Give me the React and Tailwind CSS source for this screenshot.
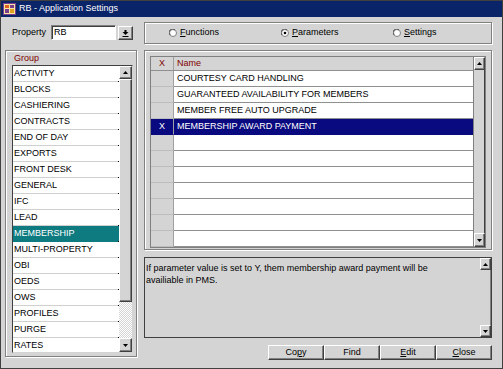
import React from "react";

const raised =
  "border border-t-white border-l-white border-r-[#404040] border-b-[#404040] shadow-[inset_-1px_-1px_0_#808080]";
const etched =
  "border border-[#808080] shadow-[inset_1px_1px_0_#ffffff,1px_1px_0_#ffffff]";

function Arrow({ dir }) {
  return (
    <svg width="5" height="3" viewBox="0 0 5 3">
      {dir === "up" ? (
        <path d="M2.5 0 L5 3 L0 3Z" fill="#000" />
      ) : (
        <path d="M0 0 L5 0 L2.5 3Z" fill="#000" />
      )}
    </svg>
  );
}

function ScrollBtn({ dir, h }) {
  return (
    <div
      className={`${raised} bg-[#d4d4d4] flex items-center justify-center shrink-0`}
      style={{ height: h }}
    >
      <Arrow dir={dir} />
    </div>
  );
}

function Radio({ checked, label, u }) {
  return (
    <div className="flex items-center w-[112px] shrink-0">
      <svg width="8" height="8" viewBox="0 0 8 8" className="mr-[3px]">
        <circle cx="4" cy="4" r="3.5" fill="#fff" stroke="#808080" strokeWidth="1" />
        <path d="M1 6 A3.5 3.5 0 0 1 6 1" stroke="#404040" strokeWidth="0.8" fill="none" />
        {checked && <circle cx="4" cy="4" r="1.3" fill="#000" />}
      </svg>
      <span>
        <span className="underline">{u}</span>
        {label}
      </span>
    </div>
  );
}

const groups = [
  "ACTIVITY",
  "BLOCKS",
  "CASHIERING",
  "CONTRACTS",
  "END OF DAY",
  "EXPORTS",
  "FRONT DESK",
  "GENERAL",
  "IFC",
  "LEAD",
  "MEMBERSHIP",
  "MULTI-PROPERTY",
  "OBI",
  "OEDS",
  "OWS",
  "PROFILES",
  "PURGE",
  "RATES",
];

const params = [
  { name: "COURTESY CARD HANDLING" },
  { name: "GUARANTEED AVAILABILITY FOR MEMBERS" },
  { name: "MEMBER FREE AUTO UPGRADE" },
  { name: "MEMBERSHIP AWARD PAYMENT", sel: true },
  {}, {}, {}, {}, {}, {}, {},
];

function Btn({ children }) {
  return (
    <div
      className={`${raised} bg-[#d4d4d4] w-[56px] h-[15px] flex items-center justify-center leading-none`}
    >
      {children}
    </div>
  );
}

export default function App() {
  return (
    <div
      className="w-[503px] h-[369px] bg-[#d4d4d4] border border-[#404040] flex flex-col overflow-hidden text-[9px] text-black"
      style={{ fontFamily: '"Liberation Sans", Arial, sans-serif' }}
    >
      {/* Title bar */}
      <div className="h-[16px] bg-[#0a246a] flex items-center pl-[2px] text-white shrink-0">
        <svg width="13" height="12" viewBox="0 0 13 12" className="mr-[3px]">
          <rect x="0.5" y="0.5" width="12" height="11" fill="#f4e4a0" stroke="#7a3c8c" />
          <rect x="2" y="2" width="4" height="3" fill="#e06020" />
          <rect x="7" y="2" width="4" height="3" fill="#7a3c8c" />
          <rect x="2" y="6" width="4" height="4" fill="#7a3c8c" />
          <rect x="7" y="6" width="4" height="4" fill="#e0a020" />
        </svg>
        <span className="text-[9px]">RB - Application Settings</span>
      </div>

      {/* Top row */}
      <div className="flex h-[33px] shrink-0 pl-[4px]">
        <div className="w-[132px] pt-[8px] flex items-start">
          <span className="w-[46px] shrink-0 pl-[7px] h-[15px] leading-[15px]">Property</span>
          <div className="w-[65px] shrink-0 h-[15px] bg-white border border-t-[#808080] border-l-[#808080] border-r-white border-b-white shadow-[inset_1px_1px_0_#404040] pl-[2px] leading-[12px]">
            RB
          </div>
          <div className={`${raised} bg-[#d4d4d4] ml-[2px] w-[15px] shrink-0 h-[14px] mt-[1px] flex items-center justify-center`}>
            <svg width="7" height="7" viewBox="0 0 7 7">
              <rect x="2.5" y="0" width="2" height="2" fill="#000" />
              <path d="M0.5 2 L6.5 2 L3.5 5Z" fill="#000" />
              <rect x="0.5" y="6" width="6" height="1" fill="#000" />
            </svg>
          </div>
        </div>
        <div className="w-[348px] ml-[7px] pt-[5px]">
          <div className={`${etched} h-[22px] flex items-center pl-[24px]`}>
            <Radio u="F" label="unctions" />
            <Radio u="P" label="arameters" checked />
            <Radio u="S" label="ettings" />
          </div>
        </div>
      </div>

      {/* Main row */}
      <div className="flex pl-[4px]">
        {/* Left group panel */}
        <div className={`${etched} w-[132px] h-[307px] flex flex-col`}>
          <div className="pl-[8px] h-[14px] leading-[15px] text-[#800000]">Group</div>
          <div className="ml-[6px] w-[121px] h-[288px] bg-white border border-t-[#404040] border-l-[#404040] border-r-[#d4d4d4] border-b-[#d4d4d4] flex">
            <div className="flex-1 flex flex-col overflow-hidden">
              {groups.map((g) => (
                <div
                  key={g}
                  className={`h-[16px] shrink-0 leading-[15px] border-b relative ${
                    g === "MEMBERSHIP"
                      ? "bg-[#0e7b80] text-white border-[#0e7b80]"
                      : "border-[#d0d0d0]"
                  }`}
                >
                  <span className="pl-[1px]">{g}</span>
                  <span className="absolute right-0 bottom-[-1px] w-[1px] h-[1px] bg-[#000]" />
                </div>
              ))}
            </div>
            <div className="w-[13px] flex flex-col shrink-0">
              <ScrollBtn dir="up" h={13} />
              <div className={`${raised} bg-[#d4d4d4] h-[223px] shrink-0`} />
              <div className="h-[36px] shrink-0 bg-[repeating-conic-gradient(#ffffff_0_25%,#d4d4d4_0_50%)] bg-[length:2px_2px]" />
              <ScrollBtn dir="down" h={14} />
            </div>
          </div>
        </div>

        {/* Right column */}
        <div className="w-[348px] ml-[7px] flex flex-col">
          <div className={`${etched} h-[200px] pl-[5px] pt-[5px]`}>
            <div className="w-[336px] h-[192px] border border-[#808080] flex">
              <div className="w-[323px] flex flex-col">
                <div className="h-[14px] flex shrink-0 bg-[#d4d4d4] border-b border-[#909090]">
                  <div className="w-[23px] text-center text-[#800000] border-r border-[#a0a0a0] leading-[13px]">X</div>
                  <div className="flex-1 pl-[3px] text-[#800000] leading-[13px]">Name</div>
                </div>
                {params.map((p, i) => (
                  <div key={i} className="h-[16px] flex shrink-0">
                    <div
                      className={`w-[23px] text-center leading-[15px] border-b border-r ${
                        p.sel
                          ? "bg-[#0a0a80] text-white border-b-[#0a0a80] border-r-[#a0a0a0]"
                          : "bg-[#d4d4d4] border-b-[#bdbdbd] border-r-[#a0a0a0]"
                      }`}
                    >
                      {p.sel ? "X" : ""}
                    </div>
                    <div
                      className={`flex-1 pl-[3px] leading-[15px] border-b ${
                        p.sel
                          ? "bg-[#0a0a80] text-white border-[#0a0a80]"
                          : "bg-white border-[#909090]"
                      }`}
                    >
                      {p.name || ""}
                    </div>
                  </div>
                ))}
              </div>
              <div className="w-[12px] flex flex-col border-l border-[#808080]">
                <ScrollBtn dir="up" h={13} />
                <div className="flex-1 bg-[#d4d4d4] border-r border-[#404040]" />
                <ScrollBtn dir="down" h={14} />
              </div>
            </div>
          </div>

          <div className="mt-[7px] h-[81px] border border-[#404040] flex">
            <div className="flex-1 pl-[1px] pt-[4px] leading-[12px]">
              If parameter value is set to Y, them membership award payment will be
              <br />
              availiable in PMS.
            </div>
            <div className="w-[11px] flex flex-col">
              <ScrollBtn dir="up" h={12} />
              <div className="flex-1 bg-[#d4d4d4] border-r border-[#808080]" />
              <ScrollBtn dir="down" h={12} />
            </div>
          </div>

          <div className="mt-[7px] flex justify-end">
            <Btn>
              Co<span className="underline">p</span>y
            </Btn>
            <Btn>Find</Btn>
            <Btn>
              <span className="underline">E</span>dit
            </Btn>
            <Btn>
              <span className="underline">C</span>lose
            </Btn>
          </div>
        </div>
      </div>
    </div>
  );
}
